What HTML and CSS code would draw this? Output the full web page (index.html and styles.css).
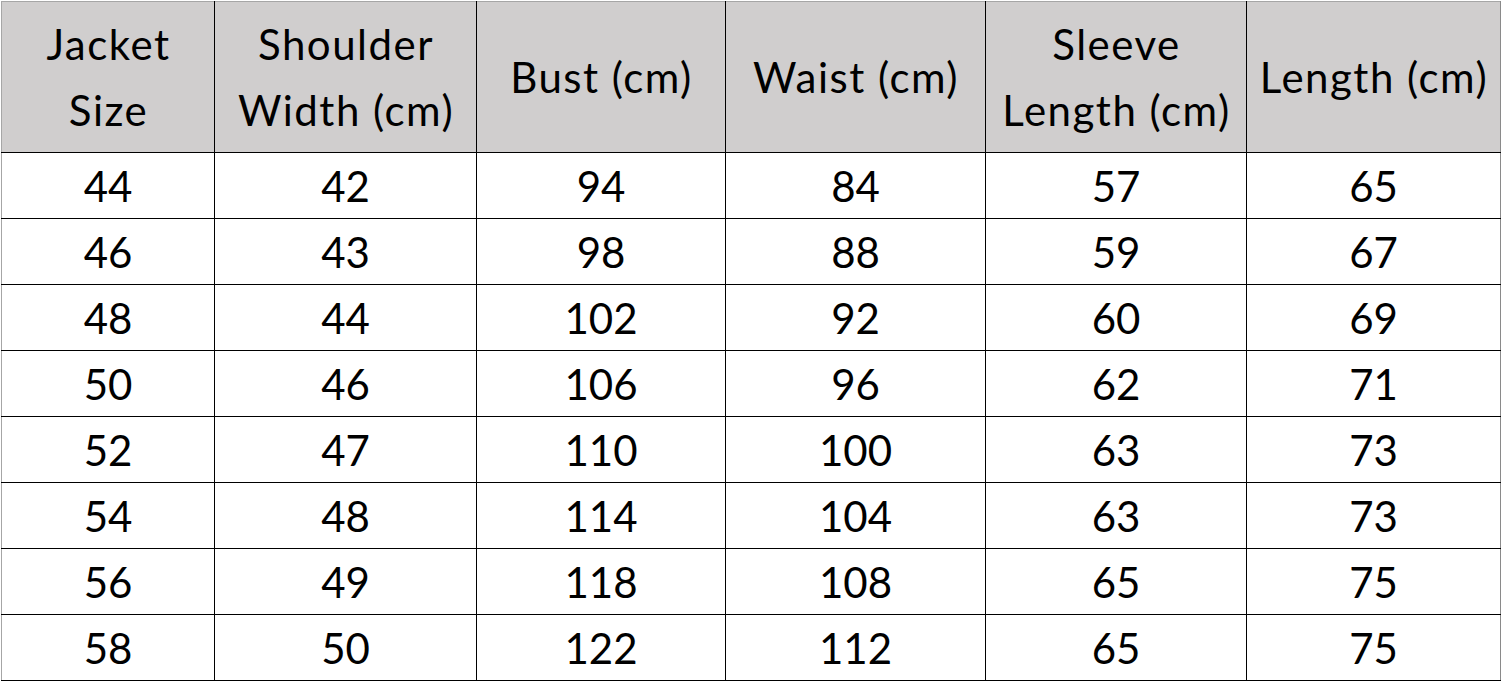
FILE: index.html
```html
<!DOCTYPE html>
<html>
<head>
<meta charset="utf-8">
<link rel="stylesheet" href="styles.css">
</head>
<body>
<table class="size-table">
  <colgroup>
    <col class="c1"><col class="c2"><col class="c3"><col class="c4"><col class="c5"><col class="c6">
  </colgroup>
  <thead>
    <tr>
      <th>Jacket<br>Size</th>
      <th>Shoulder<br>Width (cm)</th>
      <th>Bust (cm)</th>
      <th>Waist (cm)</th>
      <th>Sleeve<br>Length (cm)</th>
      <th>Length (cm)</th>
    </tr>
  </thead>
  <tbody>
    <tr><td>44</td><td>42</td><td>94</td><td>84</td><td>57</td><td>65</td></tr>
    <tr><td>46</td><td>43</td><td>98</td><td>88</td><td>59</td><td>67</td></tr>
    <tr><td>48</td><td>44</td><td>102</td><td>92</td><td>60</td><td>69</td></tr>
    <tr><td>50</td><td>46</td><td>106</td><td>96</td><td>62</td><td>71</td></tr>
    <tr><td>52</td><td>47</td><td>110</td><td>100</td><td>63</td><td>73</td></tr>
    <tr><td>54</td><td>48</td><td>114</td><td>104</td><td>63</td><td>73</td></tr>
    <tr><td>56</td><td>49</td><td>118</td><td>108</td><td>65</td><td>75</td></tr>
    <tr><td>58</td><td>50</td><td>122</td><td>112</td><td>65</td><td>75</td></tr>
  </tbody>
</table>
</body>
</html>
```
FILE: styles.css
```css
html, body {
  margin: 0;
  padding: 0;
  background: #ffffff;
}
body {
  padding: 1px 0 0 1px;
  font-family: Lato, "Open Sans", sans-serif;
  color: #000;
}
.size-table {
  border-collapse: collapse;
  table-layout: fixed;
  width: 1500px;
  border-top: 1px solid #a6a6a6;
  border-left: 1px solid #a6a6a6;
}
.c1 { width: 213px; }
.c2 { width: 262px; }
.c3 { width: 249px; }
.c4 { width: 260px; }
.c5 { width: 261px; }
.c6 { width: 254px; }
.size-table th,
.size-table td {
  padding: 0;
  text-align: center;
  vertical-align: middle;
  border: 1px solid #000;
  font-weight: 400;
  font-size: 42px;
}
.size-table thead th {
  background: #d0cece;
  height: 150px;
  line-height: 66px;
  letter-spacing: 1.5px;
  padding-left: 1px;
  border-top-color: #a6a6a6;
}
.size-table thead th:first-child,
.size-table tbody td:first-child {
  border-left-color: #a6a6a6;
}
.size-table th:last-child,
.size-table td:last-child {
  border-right-color: #8a8a8a;
}
.size-table td {
  height: 65px;
  line-height: 40px;
}
```
